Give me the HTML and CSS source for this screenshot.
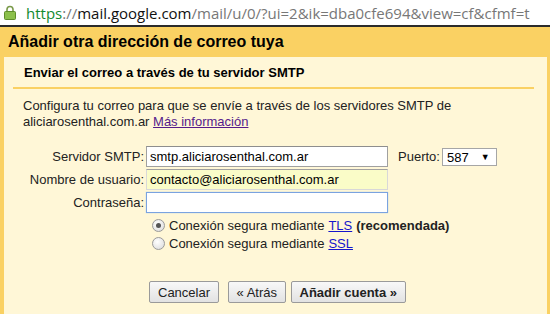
FILE: index.html
```html
<!DOCTYPE html>
<html lang="es">
<head>
<meta charset="UTF-8" />
<title>Añadir otra dirección de correo tuya</title>
<link rel="stylesheet" href="styles.css">
</head>
<body>

<div class="urlbar">
  <svg class="lock" width="12" height="15" viewBox="0 0 12 15">
    <path d="M3 7V4.5a3 3 0 0 1 6 0V7" fill="none" stroke="#7a9a4a" stroke-width="1.6"/>
    <rect x="0.5" y="6.5" width="11" height="8" rx="1" fill="#8cc04b" stroke="#5f8d2b"/>
  </svg>
  <span class="scheme">https</span><span class="dim">://</span><span class="host">mail.google.com</span><span class="dim">/mail/u/0/?ui=2&amp;ik=dba0cfe694&amp;view=cf&amp;cfmf=t</span>
</div>

<div class="dialog">
  <h1>Añadir otra dirección de correo tuya</h1>
  <div class="panel">
    <h2>Enviar el correo a través de tu servidor SMTP</h2>
    <p class="intro">Configura tu correo para que se envíe a través de los servidores SMTP de<br>aliciarosenthal.com.ar <a href="#">Más información</a></p>

    <form class="smtp">
      <div class="row">
        <label for="server">Servidor SMTP:</label>
        <input type="text" id="server" value="smtp.aliciarosenthal.com.ar" />
        <label for="port" class="port-label">Puerto:</label>
        <span class="select" id="port">587 <span class="arrow">▼</span></span>
      </div>
      <div class="row">
        <label for="user">Nombre de usuario:</label>
        <input type="text" id="user" class="autofill" value="contacto@aliciarosenthal.com.ar" />
      </div>
      <div class="row">
        <label for="pass">Contraseña:</label>
        <input type="password" id="pass" class="focused" />
      </div>

      <div class="options">
        <label class="radio"><span class="dot checked"></span>Conexión segura mediante <a href="#">TLS</a> <b>(recomendada)</b></label>
        <label class="radio"><span class="dot"></span>Conexión segura mediante <a href="#">SSL</a></label>
      </div>

      <div class="actions">
        <button type="button">Cancelar</button>
        <button type="button" class="back">« Atrás</button>
        <button type="button" class="primary">Añadir cuenta »</button>
      </div>
    </form>
  </div>
</div>

</body>
</html>
```

FILE: styles.css
```css
body {
  margin: 0;
  font-family: "Liberation Sans", Arial, sans-serif;
  font-size: 13px;
  color: #222;
  background: #fad163;
  overflow: hidden;
  height: 314px;
}
.urlbar {
  height: 25px;
  background: #fff;
  border-bottom: 2px solid #2b2b2b;
  display: flex;
  align-items: center;
  padding-left: 4px;
  font-family: "Open Sans", sans-serif;
  font-size: 15px;
  white-space: nowrap;
  overflow: hidden;
}
.lock {
  margin-right: 10px;
  flex: none;
}
.scheme {
  color: #138a2e;
}
.dim {
  color: #777;
}
.host {
  color: #111;
}
.dialog {
  padding: 0 3px 0 4px;
}
h1 {
  margin: 0;
  font-size: 16px;
  font-weight: bold;
  color: #000;
  padding: 6px 4px 0;
  height: 24px;
}
.panel {
  background: #fff7d7;
  padding: 0 9px;
  height: 257px;
  box-sizing: border-box;
}
h2 {
  margin: 0 4px 0 0;
  font-size: 13px;
  font-weight: bold;
  color: #000;
  padding: 8px 0 7px 11px;
  border-bottom: 2px solid #fad163;
}
.intro {
  margin: 9px 0 0 10px;
  line-height: 16px;
}
a {
  color: #1515cc;
}
.intro a {
  color: #551a8b;
}
.smtp {
  margin-top: 15px;
}
.row {
  display: flex;
  align-items: center;
  height: 23px;
}
.row label {
  width: 131px;
  text-align: right;
  padding-right: 2px;
}
.row input {
  width: 242px;
  height: 21px;
  box-sizing: border-box;
  margin: 0;
  border: 1px solid #a0a0a0;
  border-top-color: #8e8e8e;
  padding: 1px 3px;
  font: 13px "Liberation Sans", Arial, sans-serif;
  background: #fff;
  color: #000;
}
.row input.autofill {
  background: #fafcc8;
  border-color: #d8d8d8;
  border-top-color: #a0a0a0;
}
.row input.focused {
  border: 1px solid #7aa3e0;
  box-shadow: 0 0 1px #9cc0f0;
}
.row .port-label {
  width: auto;
  padding: 0;
  margin-left: 10px;
}
.select {
  margin-left: 2px;
  border: 1px solid #a6a6a6;
  background: #fff;
  height: 18px;
  box-sizing: border-box;
  padding: 1px 6px 0 4px;
  display: inline-flex;
  align-items: center;
  gap: 12px;
  color: #000;
}
.arrow {
  font-size: 9px;
}
.options {
  margin: 2px 0 0 139px;
}
.radio {
  display: flex;
  align-items: center;
  height: 18px;
}
.radio b {
  margin-left: 4px;
}
.radio a {
  margin-left: 4px;
}
.dot {
  width: 11px;
  height: 11px;
  border-radius: 50%;
  border: 1px solid #9a9a9a;
  background: radial-gradient(circle at 40% 35%, #ffffff, #d8d8d8);
  margin-right: 4px;
  position: relative;
}
.dot.checked::after {
  content: "";
  position: absolute;
  left: 3px;
  top: 3px;
  width: 5px;
  height: 5px;
  border-radius: 50%;
  background: #555;
}
.actions {
  margin: 29px 0 0 136px;
  display: flex;
}
.actions button {
  font: 13px "Liberation Sans", Arial, sans-serif;
  color: #222;
  height: 22px;
  padding: 0 8px;
  margin-right: 9px;
  border: 1px solid #9a9a9a;
  border-radius: 2px;
  background: linear-gradient(#f8f8f8, #e2e2e2);
}
.actions .back {
  margin-right: 5px;
  padding: 0 7.5px;
}
.actions .primary {
  font-weight: bold;
}
```
